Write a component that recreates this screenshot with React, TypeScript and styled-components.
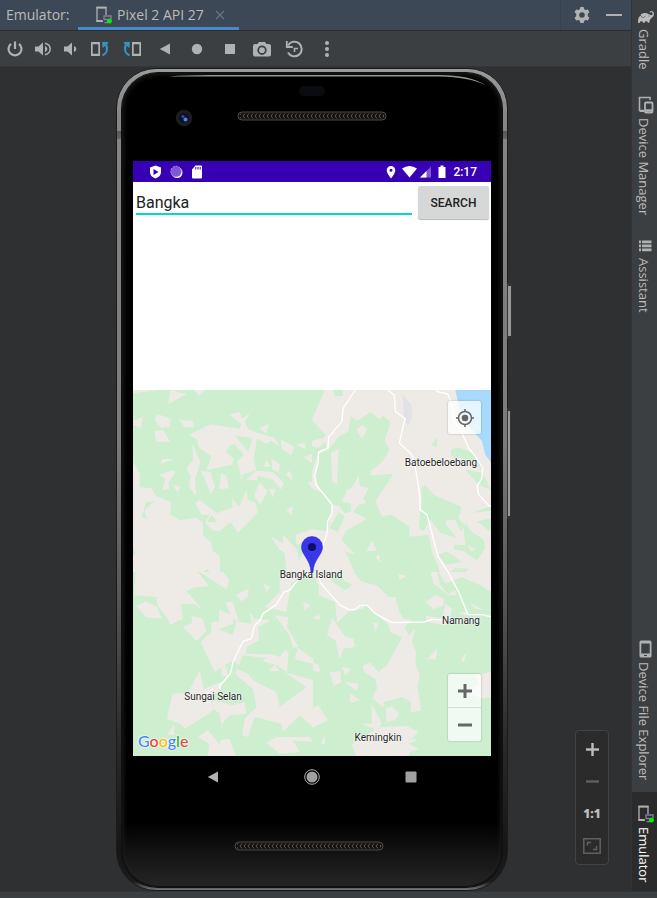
import React from "react";
import styled, { createGlobalStyle } from "styled-components";
import { SiGradle } from "react-icons/si";

const UI_FONT = '"Open Sans", "Noto Sans", sans-serif';
const DEVICE_FONT = 'Roboto, "Liberation Sans", sans-serif';

const GlobalStyle = createGlobalStyle`
  *, *::before, *::after { box-sizing: border-box; }
  body { margin: 0; background: #2e3032; font-family: ${UI_FONT}; color: #bbbbbb; }
  button, input { font: inherit; color: inherit; border: 0; padding: 0; margin: 0; background: none; }
  button { cursor: pointer; }
  svg { display: block; }
`;

const Page = styled.div`
  display: flex;
  flex-direction: column;
  min-height: 100vh;
`;

const Workspace = styled.div`
  flex: 1;
  display: flex;
`;

const ToolWindow = styled.main`
  flex: 1;
  min-width: 0;
  display: flex;
  flex-direction: column;
`;

const StatusStrip = styled.footer`
  height: 7px;
  background: #3c3f41;
  border-top: 1px solid #323537;
`;

/* Tool window header */

const Header = styled.header`
  display: flex;
  height: 31px;
  background: #3c4856;
  border-bottom: 1px solid #2b2d2f;
  font-size: 14px;
`;

const HeaderTitle = styled.span`
  width: 78px;
  padding-left: 6px;
  line-height: 29px;
`;

const Tab = styled.div`
  display: flex;
  align-items: center;
  gap: 5px;
  width: 161px;
  padding-left: 17px;
  border-bottom: 3px solid #4a88c7;
  padding-top: 2px;
`;

const TabName = styled.button`
  display: flex;
  align-items: center;
  gap: 4px;
  white-space: nowrap;
`;

const HeaderTools = styled.div`
  display: flex;
  margin-left: auto;
  padding: 0 1px 0 4px;
  border-left: 1px solid #37424e;
`;

const IconButton = styled.button<{ $width: number }>`
  display: flex;
  align-items: center;
  justify-content: center;
  width: ${(p) => p.$width}px;
  height: 100%;
  color: #afb1b3;
`;

const CloseButton = styled.button`
  display: flex;
  margin-left: 6px;
  color: #6c757e;
`;

const Toolbar = styled.div`
  display: flex;
  height: 36px;
  padding: 1px 0 0 1px;
  background: #3c3f41;
  border-bottom: 1px solid #323537;
`;

/* Device canvas */

const Canvas = styled.section`
  position: relative;
  flex: 1;
  display: flex;
  justify-content: center;
  align-items: flex-start;
  padding: 1px 7px 0 0;
  background: #2e3032;
`;

const Phone = styled.div`
  position: relative;
  width: 392px;
  padding: 4px 5px 3px;
  border: 1px solid #1b1b1b;
  border-radius: 40px;
  background:
    linear-gradient(180deg, transparent 62px, #555555 62px, #666666 70px, transparent 70px),
    linear-gradient(180deg, #999c9a 0, #858585 6%, #7b7b7b 45%, #555555 65%, #2a2a2a 82%, #161616 95%, #1c1c1c 99%, #777777 100%);
`;

const PhoneGlass = styled.div`
  border-radius: 36px;
  padding: 0 11px;
  background: linear-gradient(180deg, #000000 0, #000000 92%, #141414 96%, #262626 100%);
  box-shadow: inset 0 0 0 1px #101010, inset 0 0 5px 1px #222222, 0 0 0 1px #101010;
`;

const SideKey = styled.span<{ $top: number; $height: number; $width: number }>`
  position: absolute;
  left: 100%;
  top: ${(p) => p.$top}px;
  width: ${(p) => p.$width}px;
  height: ${(p) => p.$height}px;
  border: 1px solid #333333;
  border-width: 3px 1px;
  border-radius: 0 2px 2px 0;
  background: #999999;
`;

const Screen = styled.div`
  background: #ffffff;
  font-family: ${DEVICE_FONT};
  color: #212121;
`;

const StatusBar = styled.div`
  display: flex;
  align-items: center;
  height: 21px;
  padding: 0 14px 0 16px;
  background: #3700b3;
  color: #ffffff;
  font-size: 12px;
  font-weight: 500;
`;

const StatusGroup = styled.div<{ $gap: number }>`
  display: flex;
  align-items: center;
  gap: ${(p) => p.$gap}px;
  &:last-child { margin-left: auto; }
`;

const SearchArea = styled.form`
  display: flex;
  align-items: flex-start;
  gap: 6px;
  min-height: 208px;
  padding: 4px 2px 0 3px;
`;

const SearchInput = styled.input`
  flex: 1;
  min-width: 0;
  height: 29px;
  padding: 5px 0 0;
  border-bottom: 2px solid #03dac5;
  font-size: 16px;
  outline: none;
`;

const SearchButton = styled.button`
  width: 71px;
  height: 33px;
  border-radius: 2px;
  background: #d6d7d7;
  box-shadow: 0 1px 1px #bbbbbb;
  font-size: 12px;
  font-weight: 500;
`;

const MapView = styled.div`
  position: relative;
  height: 366px;
  overflow: hidden;
  background: #cdeecf;
`;

const MapArt = styled.svg`
  width: 100%;
  height: 100%;
`;

const Place = styled.span<{ $x: number; $y: number }>`
  position: absolute;
  left: ${(p) => p.$x}px;
  top: ${(p) => p.$y}px;
  transform: translate(-50%, -50%);
  font-size: 10px;
  line-height: 14px;
  white-space: nowrap;
  color: #1c1c1c;
  text-shadow: 0 0 1px #ffffff, 0 0 2px #ffffff, 0 0 2px #ffffff;
`;

const Pin = styled.svg`
  position: absolute;
  left: 168px;
  top: 146px;
`;

const MapControls = styled.div<{ $edge: "top" | "bottom" }>`
  position: absolute;
  right: 10px;
  ${(p) => (p.$edge === "top" ? "top: 11px;" : "bottom: 15px;")}
  display: flex;
  flex-direction: column;
  width: 33px;
  border-radius: 2px;
  background: rgba(255, 255, 255, 0.72);
  box-shadow: 0 0 2px rgba(0, 0, 0, 0.3);
`;

const MapButton = styled.button`
  display: flex;
  align-items: center;
  justify-content: center;
  height: 33px;
  color: #666666;
  & + & { height: 34px; border-top: 1px solid #d3ddd4; }
`;

const Brand = styled.span`
  position: absolute;
  left: 5px;
  bottom: 5px;
  font-family: Lato, sans-serif;
  font-size: 16px;
  font-weight: 500;
  line-height: 20px;
  text-shadow: 0 0 1px #ffffff, 0 0 2px #ffffff, 0 0 2px #ffffff;
`;

const BrandLetter = styled.span<{ $color: string }>`
  color: ${(p) => p.$color};
`;

const NavBar = styled.nav`
  display: flex;
  justify-content: center;
  height: 42px;
`;

/* Zoom panel over the canvas */

const ZoomPanel = styled.div`
  position: absolute;
  right: 22px;
  bottom: 26px;
  display: flex;
  flex-direction: column;
  justify-content: space-between;
  width: 34px;
  height: 135px;
  padding: 2px 0 2px;
  border: 1px solid #414345;
  border-radius: 4px;
  background: #2b2b2b;
`;

const ZoomButton = styled.button<{ $dim?: boolean }>`
  display: flex;
  align-items: center;
  justify-content: center;
  height: 32px;
  color: ${(p) => (p.$dim ? "#5e6061" : "#bbbdbf")};
  font-size: 12px;
  font-weight: 800;
`;

/* Right stripe */

const Stripe = styled.aside`
  display: flex;
  flex-direction: column;
  width: 26px;
  background: #3c3f41;
  border-left: 1px solid #323537;
`;

const StripeButton = styled.button<{ $active?: boolean }>`
  display: flex;
  flex-direction: column;
  align-items: center;
  gap: 4px;
  padding: 13px 0 12px 2px;
  background: ${(p) => (p.$active ? "#2b2b2b" : "transparent")};
  color: ${(p) => (p.$active ? "#ffffff" : "#bbbbbb")};
  &:first-child { padding-top: 9px; padding-bottom: 13px; }
  &:last-child { padding-bottom: 8px; }
`;

const StripeLabel = styled.span`
  writing-mode: vertical-rl;
  margin-right: 4px;
  font-size: 13px;
  line-height: 18px;
  white-space: nowrap;
`;

const StripeSpacer = styled.div`
  flex: 1;
`;

/* Icons */

const RunningDeviceIcon = ({ size = 18 }: { size?: number }) => (
  <svg width={size} height={size} viewBox="0 0 18 18" fill="none">
    <path d="M8 15.300H2V1.500h9V9" stroke="#afb1b3" strokeWidth="1.300" />
    <path d="M1.500.800h10v1.700h-10zM1.500 14h6v2h-6z" fill="#afb1b3" />
    <path d="M9 13.500V10h7V13M8.500 13.500h4M9.500 16.700H13" stroke="#8a7aa5" strokeWidth="1.300" />
    <circle cx="14.400" cy="15" r="2.500" fill="#00f000" />
  </svg>
);

const GearIcon = () => (
  <svg width="16" height="16" viewBox="0 0 24 24" fill="currentColor">
    <path fillRule="evenodd" d="M9.500 0h5l.8 3.400 2.100 1.200 3.400-1 2.400 4.200-2.500 2.500v3.400l2.500 2.500-2.400 4.200-3.400-1-2.100 1.200-.8 3.400h-5l-.8-3.400-2.100-1.200-3.400 1-2.400-4.200 2.500-2.500v-3.400L.8 7.800l2.400-4.200 3.400 1 2.100-1.200zM12 7.800a4.200 4.200 0 1 0 0 8.400 4.200 4.200 0 0 0 0-8.400z" />
  </svg>
);

const PowerIcon = () => (
  <svg width="18" height="18" viewBox="0 0 18 18" fill="none" stroke="currentColor" strokeWidth="2.200">
    <path d="M9 1.500v7.500M5 3.800a6.500 6.500 0 1 0 8 0" />
  </svg>
);

const VolumeUpIcon = () => (
  <svg width="18" height="16" viewBox="0 0 18 16" fill="none">
    <path d="M1 5.500h3.500L9 1.500v13l-4.500-4H1z" fill="currentColor" />
    <path d="M11 5v6c1.500-.500 2.300-1.600 2.300-3S12.500 5.500 11 5z" fill="currentColor" />
    <path d="M11 2.300c3.200.8 5.200 3 5.200 5.700s-2 4.900-5.200 5.700" stroke="currentColor" strokeWidth="1.500" />
  </svg>
);

const VolumeDownIcon = () => (
  <svg width="14" height="16" viewBox="0 0 14 16" fill="currentColor">
    <path d="M0 5.500h3.500L8 1.500v13l-4.500-4H0zM10 5v6c1.500-.500 2.300-1.600 2.300-3S11.500 5.500 10 5z" />
  </svg>
);

const RotateIcon = ({ mirrored = false }: { mirrored?: boolean }) => (
  <svg width="20" height="16" viewBox="0 0 20 16" fill="none">
    <g transform={mirrored ? "translate(20 0) scale(-1 1)" : undefined}>
      <path d="M1 1h9v14H1zM2.700 3.200v9.600h5.600V3.200z" fill="currentColor" fillRule="evenodd" />
      <path d="M12.500 14.500C16.800 12.500 18 8 16 3.500" stroke="#3592c4" strokeWidth="2.200" />
      <path d="M12 1h6.500l-1 2-5 4z" fill="#3592c4" />
    </g>
  </svg>
);

const BackIcon = ({ size }: { size: number }) => (
  <svg width={size} height={size} viewBox="0 0 12 12" fill="currentColor">
    <path d="M11 .500v11L.800 6z" />
  </svg>
);

const CameraIcon = () => (
  <svg width="18" height="16" viewBox="0 0 18 16">
    <path fill="currentColor" fillRule="evenodd" d="M6 1h6l1.500 2H16q2 0 2 2v8.500q0 2-2 2H2q-2 0-2-2V5q0-2 2-2h2.500zM9 4.500a4.700 4.700 0 1 0 0 9.400 4.700 4.700 0 0 0 0-9.400z" />
    <circle cx="9" cy="9.200" r="2.900" fill="currentColor" />
  </svg>
);

const HistoryIcon = () => (
  <svg width="19" height="18" viewBox="0 0 19 18" fill="none" stroke="currentColor" strokeWidth="2">
    <path d="M3 5.500A7.300 7.300 0 1 1 3 12.500" />
    <path d="M1.800 1v6h6" strokeWidth="1.800" />
    <path d="M9.500 12V8.500H13" strokeWidth="1.600" />
  </svg>
);

const LineIcon = ({ plus = false, size = 14, weight = 2.4 }: { plus?: boolean; size?: number; weight?: number }) => (
  <svg width={size} height={size} viewBox={`0 0 ${size} ${size}`} stroke="currentColor" strokeWidth={weight}>
    <path d={`M0 ${size / 2}H${size}`} />
    {plus && <path d={`M${size / 2} 0V${size}`} />}
  </svg>
);

const DevicesIcon = () => (
  <svg width="17" height="18" viewBox="0 0 17 18" fill="none" stroke="#afb1b3">
    <path d="M13 4V1.500H2.500v13H7" strokeWidth="1.500" />
    <path d="M2 14h5v2H3z" fill="#afb1b3" stroke="none" />
    <rect x="8" y="6.500" width="7.500" height="10" rx="1" strokeWidth="1.800" />
    <path d="M8 14.500h8" strokeWidth="2.500" />
  </svg>
);

const ListIcon = () => (
  <svg width="13" height="14" viewBox="0 0 13 14" fill="#afb1b3">
    {[0, 4, 8].map((y) => (
      <path key={y} d={`M0 ${y + 0.5}h2v2.800H0zM3 ${y + 0.5}h9.500v2.800H3z`} />
    ))}
  </svg>
);

const PhoneIcon = () => (
  <svg width="13" height="18" viewBox="0 0 13 18">
    <path fill="#afb1b3" fillRule="evenodd" d="M2 .500h9q1.500 0 1.500 1.500v14q0 1.500-1.500 1.500H2Q.500 17.500.500 16V2Q.500.500 2 .500zM2.300 3.500v10h8.400v-10zM5 15v1h3v-1z" />
  </svg>
);

const Grill = ({ x, y, id }: { x: number; y: number; id: string }) => (
  <g>
    <defs>
      <pattern id={id} width="4" height="8" patternUnits="userSpaceOnUse" x={x} y={y}>
        <path d="M3 1.500 1 4l2 2.500" fill="none" stroke="#5d5850" strokeWidth="1" />
      </pattern>
    </defs>
    <rect x={x} y={y} width="148" height="8" rx="4" fill="#14120f" stroke="#4d4b48" />
    <rect x={x + 2} y={y} width="144" height="8" fill={`url(#${id})`} />
  </g>
);

const TopBezel = () => (
  <svg width="100%" height="88" viewBox="0 0 358 88">
    <path d="M36 3.500q14-1.500 40-1.500h230q32 0 46 10q-16-8-46-8.500H76z" fill="#8b9691" />
    <rect x="166" y="13" width="26" height="10" rx="5" fill="#0b0b12" />
    <circle cx="51" cy="45" r="8.300" fill="#1d1d1f" />
    <circle cx="51" cy="45" r="5" fill="#0b1030" />
    <circle cx="50" cy="43.500" r="1.500" fill="#34509a" />
    <circle cx="52.500" cy="46.500" r="2" fill="#5b7fe0" />
    <Grill x={105} y={39} id="earpiece" />
  </svg>
);

const BottomBezel = () => (
  <svg width="100%" height="89" viewBox="0 0 358 89">
    <Grill x={102} y={44} id="speaker" />
  </svg>
);

/* Map data: land is drawn over forest in four tiles of 537 x 546 */

type Tile = { x: number; y: number; land: string[]; forest: string[]; roads: string[] };

const TILES: Tile[] = [
  {
    x: 0,
    y: -6,
    land: [
      "0,6 75,6 0,16",
      "112,6 162,18 106,48",
      "184,6 215,6 210,12 198,23",
      "0,100 30,85 24,120 0,110",
      "73,78 114,92 109,118 85,120 64,97",
      "137,96 181,99 183,118 156,118",
      "64,129 90,126 112,161 70,161",
      "168,141 232,109 320,122 325,108 289,79 322,72 325,92 350,76 336,103 347,125 425,150 440,175 415,158 400,167 372,152 362,212 370,246 328,260 325,277 322,255 312,223 332,201 304,167 288,173 278,193 303,213 297,230 220,247 235,205 200,181 190,152",
      "380,120 408,108 400,137",
      "443,154 484,177 476,202 446,182",
      "488,168 515,166 518,185",
      "513,208 540,195 540,228",
      "393,237 400,214 413,236",
      "416,212 441,230 436,252 418,245",
      "340,275 370,248 420,252 452,285 446,305 420,275 375,263 372,277",
      "380,283 403,310 382,350 363,325",
      "408,302 427,302 420,330",
      "459,260 470,247 480,278",
      "524,283 540,280 540,305",
      "178,166 202,222 186,275 190,325 168,297 173,265 160,243 180,215",
      "204,249 232,252 246,295 234,318",
      "264,255 282,265 287,301 258,303",
      "83,228 88,213 123,213",
      "78,260 120,246 126,256 106,283 109,303 88,305 97,272",
      "120,288 142,298 134,314",
      "187,345 200,335 250,375 298,360 298,332 318,356 340,305 345,335 368,345 375,372 315,434 292,402 262,428 240,428 216,404 230,380 205,380",
      "459,367 480,354 476,383",
      "411,444 450,465 448,438 492,485 497,520 510,490 540,552 460,552 455,495 440,485",
      "487,440 540,422 540,470 490,468",
      "0,220 20,258 20,298 55,300 70,325 113,342 113,380 140,396 190,390 210,402 210,443 234,462 240,488 260,505 262,552 0,552",
    ],
    forest: [
      "306,143 358,150 346,192",
      "223,402 236,380 253,403",
      "35,358 38,342 66,340 45,356 34,370 42,392 26,388",
      "0,475 8,500 0,500",
      "208,552 225,543 230,552",
    ],
    roads: [],
  },
  {
    x: 537,
    y: -6,
    land: ["0,6 540,6 540,552 0,552", "0,195 20,190 10,230 0,225"],
    forest: [
      "0,6 38,6 30,25 0,95",
      "62,6 90,6 93,25 70,24",
      "0,95 40,140 36,150 0,158",
      "0,175 18,180 40,160 44,182 18,190 12,215 0,250",
      "0,300 32,316 60,352 56,385 46,430 0,424",
      "115,85 135,98 175,73 205,95 213,83 236,103 218,158 232,185 212,220 176,250 178,262 244,258 190,340 210,386 237,380 291,415 293,446 350,440 360,490 384,552 128,552 100,490 130,500 90,457 100,430 165,392 120,370 98,376 80,352 60,350 20,300 10,262 20,200 50,183 82,145 110,130",
      "52,420 80,373 98,385 78,433",
      "360,170 374,148 375,178",
      "417,185 440,178 470,190 490,205 512,245 470,215 417,205",
      "460,245 512,255 537,305 500,290",
      "328,300 340,292 365,320 445,355 447,365 438,390 460,415 445,430 430,395 405,395 402,410 433,450 385,435 355,395 335,430 320,420 325,372 330,330",
      "478,375 520,360 540,358 540,368",
      "455,425 460,405 480,432 515,455 520,480 495,517 455,490 423,482 430,470 460,472",
      "380,500 405,490 450,522 400,530",
      "415,552 430,540 470,542 460,552",
      "495,400 540,390 540,435",
    ],
    roads: [
      "130,6 93,62 90,100 50,148 48,180 20,192 18,225 8,265 12,290 35,318 60,350 60,375 47,400 45,435 32,475 10,520 0,545",
      "228,6 247,22 250,70 279,92 262,165 300,200 312,250 322,310 325,365 345,380 378,505 408,552",
      "370,6 380,12 408,18 420,50 425,100 450,135 470,180 490,205 512,240 510,270 495,295 500,320 530,352 540,356",
    ],
  },
  {
    x: 0,
    y: 546,
    land: [
      "8,0 195,0 228,42 180,47 160,57 210,115 183,95 143,95 150,140 110,160 105,140 75,103 70,75 3,70",
      "200,0 270,0 290,25 280,52 228,18",
      "10,103 38,88 72,105 87,140 40,136",
      "308,68 347,50 345,75 325,88",
      "392,35 411,45 400,60",
      "150,165 178,152 175,132 208,140 220,175 192,208",
      "277,92 298,88 318,150 300,140",
      "235,150 258,148 258,113 300,130 300,155 257,172 300,190 310,148 355,155 350,120 365,140 413,145 375,165 378,205 340,225 338,245 425,248 420,260 330,250 318,280 300,265 245,300 203,210 235,180",
      "470,0 540,0 495,20 475,35 460,120 395,105 440,60 440,20",
      "510,90 532,98 515,117",
      "425,130 467,135 462,165 497,225 480,228 470,190",
      "388,267 415,245 440,255 455,235 467,240 462,300 430,280",
      "495,228 540,260 540,275 485,262",
      "407,298 425,278 440,298",
      "266,285 280,282 285,315 266,310",
      "118,365 165,362 200,296 213,350 265,330 262,360 235,370 240,415 220,430 155,470 140,455 102,440",
      "240,385 300,400 335,390 340,425 290,430 265,458 260,425 240,410",
      "308,290 345,305 360,325 430,360 440,405 520,345 455,300 540,325 540,465 500,430 450,480 445,455 365,435 345,495 328,490 335,440 370,405 360,350 310,310",
      "195,495 225,475 262,520 262,505 290,500 298,525 310,552 225,552 228,515",
      "400,512 430,495 530,495 540,510 480,505 500,540 440,545",
      "103,487 122,460 125,490",
    ],
    forest: [],
    roads: ["540,0 505,15 485,35 470,55 453,60 430,98 390,125 380,148 365,160 355,200 330,208 300,270 292,305 260,342 262,352", "240,350 220,365"],
  },
  {
    x: 537,
    y: 546,
    land: [
      "0,0 125,0 150,30 195,40 230,75 250,75 260,115 275,140 300,145 278,165 290,190 310,170 300,210 312,240 310,275 323,310 317,345 327,415 295,422 298,390 270,375 215,390 215,408 180,378 195,350 190,320 155,300 153,280 175,273 200,300 228,275 270,195 235,180 230,160 190,125 165,100 150,110 110,120 75,152 70,90 20,70 20,40",
      "0,135 28,128 20,145",
      "60,137 100,195 125,200 128,225 95,230 83,263 70,205 45,190",
      "260,5 283,12 262,25",
      "355,0 375,0 385,40 410,70 365,35",
      "380,0 537,0 537,60 505,40 450,15 400,35",
      "342,90 370,68 395,80 395,100 365,112",
      "405,68 430,55 432,70",
      "340,130 390,140 400,95 420,110 415,135 400,160 345,150",
      "437,122 475,120 460,130",
      "472,90 515,115 490,110",
      "183,150 200,155 190,178",
      "345,262 375,230 372,262",
      "447,262 465,240 455,272",
      "0,270 20,278 25,300 5,298",
      "53,300 85,298 87,332 65,340",
      "90,285 115,290 100,310",
      "97,330 140,335 135,357",
      "113,363 145,385 115,393",
      "0,410 18,400 48,445 0,468",
      "178,395 210,455 195,475 150,455 180,455",
      "222,410 240,403 262,425 250,445 222,450",
      "120,517 200,465 285,462 320,480 300,500 318,505 290,515 320,530 295,540 290,552 132,552",
      "490,310 537,300 537,375 505,380 470,360 500,335",
      "27,515 38,488 40,515",
    ],
    forest: ["50,0 88,0 95,25 120,40 100,55 62,30"],
    roads: [
      "20,15 25,30 40,50 85,100 110,112 128,113 145,100 165,100 190,125 240,152 335,150 360,143 400,143",
      "470,128 510,128 540,135",
      "408,0 440,60 468,128",
    ],
  },
];

const MapDrawing = () => (
  <MapArt viewBox="0 0 1074 1098" preserveAspectRatio="xMidYMid slice" aria-hidden="true">
    <rect width="1074" height="1098" fill="#cdeecf" />
    {TILES.map((t) => (
      <g key={`${t.x},${t.y}`} transform={`translate(${t.x} ${t.y})`}>
        {t.land.map((p) => <polygon key={p} points={p} fill="#eeebe7" />)}
        {t.forest.map((p) => <polygon key={p} points={p} fill="#cdeecf" />)}
      </g>
    ))}
    <g transform="translate(537 -6)">
      <g fill="#eeebe7">
        <path d="M57 195 80 183 75 290 60 280zM133 125 150 110 166 122 150 152zM163 490 180 457 195 488zM190 510 200 497 207 525zM468 470 490 485 475 490z" />
        <path d="M90 342 105 305 118 300 140 262 143 295 170 300 155 330 163 345 140 350 120 378 115 345z" />
      </g>
      <path d="M272 20 298 50 300 85 288 115 275 85z" fill="#e1e1e6" />
      <path d="M430 6H540V228L520 200 510 160 480 125 455 95 440 50z" fill="#a8d9ff" />
    </g>
    <g fill="none" stroke="#ffffff" strokeWidth="4" strokeLinejoin="round">
      {TILES.map((t) => (
        <g key={`${t.x},${t.y}`} transform={`translate(${t.x} ${t.y})`}>
          {t.roads.map((p) => <polyline key={p} points={p} />)}
        </g>
      ))}
    </g>
  </MapArt>
);

const BRAND: [string, string][] = [
  ["G", "#4285f4"],
  ["o", "#ea4335"],
  ["o", "#fbbc05"],
  ["g", "#4285f4"],
  ["l", "#34a853"],
  ["e", "#ea4335"],
];

const PLACES = [
  { name: "Batoebeloebang", x: 308, y: 73 },
  { name: "Bangka Island", x: 178, y: 185 },
  { name: "Namang", x: 328, y: 231 },
  { name: "Sungai Selan", x: 80, y: 307 },
  { name: "Kemingkin", x: 245, y: 348 },
];

export default function App() {
  return (
    <Page>
      <GlobalStyle />
      <Workspace>
        <ToolWindow>
          <Header>
            <HeaderTitle>Emulator:</HeaderTitle>
            <Tab>
              <TabName type="button">
                <RunningDeviceIcon />
                Pixel 2 API 27
              </TabName>
              <CloseButton type="button" aria-label="Close tab">
                <svg width="10" height="10" viewBox="0 0 10 10" stroke="currentColor" strokeWidth="1.200">
                  <path d="M1 1l8 8M9 1 1 9" />
                </svg>
              </CloseButton>
            </Tab>
            <HeaderTools>
              <IconButton $width={33} type="button" aria-label="Settings"><GearIcon /></IconButton>
              <IconButton $width={32} type="button" aria-label="Hide"><LineIcon size={16} weight={2} /></IconButton>
            </HeaderTools>
          </Header>
          <Toolbar role="toolbar">
            <IconButton $width={28} type="button" aria-label="Power"><PowerIcon /></IconButton>
            <IconButton $width={28} type="button" aria-label="Volume up"><VolumeUpIcon /></IconButton>
            <IconButton $width={27} type="button" aria-label="Volume down"><VolumeDownIcon /></IconButton>
            <IconButton $width={32} type="button" aria-label="Rotate left"><RotateIcon /></IconButton>
            <IconButton $width={32} type="button" aria-label="Rotate right"><RotateIcon mirrored /></IconButton>
            <IconButton $width={33} type="button" aria-label="Back"><BackIcon size={12} /></IconButton>
            <IconButton $width={32} type="button" aria-label="Home">
              <svg width="12" height="12" viewBox="0 0 12 12"><circle cx="6" cy="6" r="5.200" fill="currentColor" /></svg>
            </IconButton>
            <IconButton $width={33} type="button" aria-label="Overview">
              <svg width="10" height="10" viewBox="0 0 10 10"><path d="M0 0h10v10H0z" fill="currentColor" /></svg>
            </IconButton>
            <IconButton $width={32} type="button" aria-label="Take screenshot"><CameraIcon /></IconButton>
            <IconButton $width={33} type="button" aria-label="Snapshots"><HistoryIcon /></IconButton>
            <IconButton $width={32} type="button" aria-label="More">
              <svg width="4" height="16" viewBox="0 0 4 16" fill="currentColor">
                <circle cx="2" cy="2" r="2" /><circle cx="2" cy="8" r="2" /><circle cx="2" cy="14" r="2" />
              </svg>
            </IconButton>
          </Toolbar>
          <Canvas>
            <Phone>
              <SideKey $top={214} $height={56} $width={5} />
              <SideKey $top={339} $height={111} $width={4} />
              <PhoneGlass>
                <TopBezel />
                <Screen>
                  <StatusBar>
                    <StatusGroup $gap={8}>
                      <svg width="13" height="14" viewBox="0 0 13 14">
                        <path fill="#fff" fillRule="evenodd" d="M6.500.500 12 2.500v4.500q0 4.500-5.500 6.500Q1 11.500 1 7V2.500zM4.500 4v6l5-3z" />
                      </svg>
                      <svg width="13" height="14" viewBox="0 0 13 14">
                        <circle cx="7" cy="7.500" r="5.500" fill="#fff" />
                        <circle cx="6" cy="6.500" r="5.300" fill="#8258d0" stroke="#a98ee0" strokeDasharray="2 1" />
                      </svg>
                      <svg width="12" height="14" viewBox="0 0 12 14">
                        <path fill="#fff" fillRule="evenodd" d="M4.500.500H10q1 0 1 1v11q0 1-1 1H2q-1 0-1-1V4.500zM4.300 2v2.500h1V2zM6.500 2v2.500h1V2zM8.700 2v2.500h1V2z" />
                      </svg>
                    </StatusGroup>
                    <StatusGroup $gap={5}>
                      <svg width="12" height="14" viewBox="0 0 12 14">
                        <path fill="#fff" fillRule="evenodd" d="M6 1a4.300 4.300 0 0 1 4.300 4.300Q10.300 8 6 13.500 1.700 8 1.700 5.300A4.300 4.300 0 0 1 6 1zM6 3.800a1.500 1.500 0 1 0 0 3 1.500 1.500 0 0 0 0-3z" />
                      </svg>
                      <svg width="29" height="14" viewBox="0 0 29 14">
                        <path d="M0 3.500Q7.500-1.500 15 3.500L7.500 12.500z" fill="#fff" />
                        <path d="M29 1.500v11H18z" fill="#8258d0" />
                        <path d="M24.500 6v6.500H18z" fill="#fff" />
                      </svg>
                      <svg width="12" height="14" viewBox="0 0 12 14">
                        <path d="M4.500.500h3v1.500h2v11h-7V2h2z" fill="#fff" />
                      </svg>
                      2:17
                    </StatusGroup>
                  </StatusBar>
                  <SearchArea onSubmit={(e) => e.preventDefault()}>
                    <SearchInput aria-label="Location" defaultValue="Bangka" />
                    <SearchButton type="submit">SEARCH</SearchButton>
                  </SearchArea>
                  <MapView>
                    <MapDrawing />
                    {PLACES.map((p) => (
                      <Place key={p.name} $x={p.x} $y={p.y}>{p.name}</Place>
                    ))}
                    <Pin width="22" height="37" viewBox="0 0 22 37">
                      <path d="M11 .500A10.500 10.500 0 0 1 21.500 11C21.500 19 12 24 12 36.500H10C10 24 .500 19 .500 11A10.500 10.500 0 0 1 11 .500z" fill="#3a36ea" stroke="#2c29c4" strokeWidth=".600" />
                      <circle cx="11" cy="11" r="4" fill="#100e66" />
                    </Pin>
                    <MapControls $edge="top">
                      <MapButton type="button" aria-label="My location">
                        <svg width="18" height="18" viewBox="0 0 18 18" fill="none" stroke="currentColor" strokeWidth="1.500">
                          <circle cx="9" cy="9" r="6.500" />
                          <circle cx="9" cy="9" r="3.300" fill="currentColor" stroke="none" />
                          <path d="M9 0v3M9 15v3M0 9h3M15 9h3" />
                        </svg>
                      </MapButton>
                    </MapControls>
                    <MapControls $edge="bottom">
                      <MapButton type="button" aria-label="Zoom map in"><LineIcon plus weight={3} /></MapButton>
                      <MapButton type="button" aria-label="Zoom map out"><LineIcon weight={3} /></MapButton>
                    </MapControls>
                    <Brand>
                      {BRAND.map(([letter, color], i) => (
                        <BrandLetter key={i} $color={color}>{letter}</BrandLetter>
                      ))}
                    </Brand>
                  </MapView>
                </Screen>
                <NavBar>
                  <IconButton $width={99} type="button" aria-label="Device back"><BackIcon size={12} /></IconButton>
                  <IconButton $width={99} type="button" aria-label="Device home">
                    <svg width="16" height="16" viewBox="0 0 16 16">
                      <circle cx="8" cy="8" r="7.300" fill="none" stroke="#b0b0b0" />
                      <circle cx="8" cy="8" r="5.500" fill="#a0a0a0" />
                    </svg>
                  </IconButton>
                  <IconButton $width={99} type="button" aria-label="Device overview">
                    <svg width="12" height="12" viewBox="0 0 12 12"><rect x=".500" y=".500" width="11" height="11" rx="1" fill="#a0a0a0" /></svg>
                  </IconButton>
                </NavBar>
                <BottomBezel />
              </PhoneGlass>
            </Phone>
            <ZoomPanel>
              <ZoomButton type="button" aria-label="Zoom in"><LineIcon plus size={13} /></ZoomButton>
              <ZoomButton type="button" aria-label="Zoom out" $dim><LineIcon size={13} /></ZoomButton>
              <ZoomButton type="button">1:1</ZoomButton>
              <ZoomButton type="button" aria-label="Fit to window" $dim>
                <svg width="18" height="16" viewBox="0 0 18 16" fill="none" stroke="currentColor" strokeWidth="1.500">
                  <path d="M.800.800h16.400v14.400H.800zM4.500 7.500V4.500H8M13.500 8v3.500H10" />
                </svg>
              </ZoomButton>
            </ZoomPanel>
          </Canvas>
        </ToolWindow>
        <Stripe>
          <StripeButton type="button"><SiGradle size={16} /><StripeLabel>Gradle</StripeLabel></StripeButton>
          <StripeButton type="button"><DevicesIcon /><StripeLabel>Device Manager</StripeLabel></StripeButton>
          <StripeButton type="button"><ListIcon /><StripeLabel>Assistant</StripeLabel></StripeButton>
          <StripeSpacer />
          <StripeButton type="button"><PhoneIcon /><StripeLabel>Device File Explorer</StripeLabel></StripeButton>
          <StripeButton type="button" $active><RunningDeviceIcon /><StripeLabel>Emulator</StripeLabel></StripeButton>
        </Stripe>
      </Workspace>
      <StatusStrip />
    </Page>
  );
}
